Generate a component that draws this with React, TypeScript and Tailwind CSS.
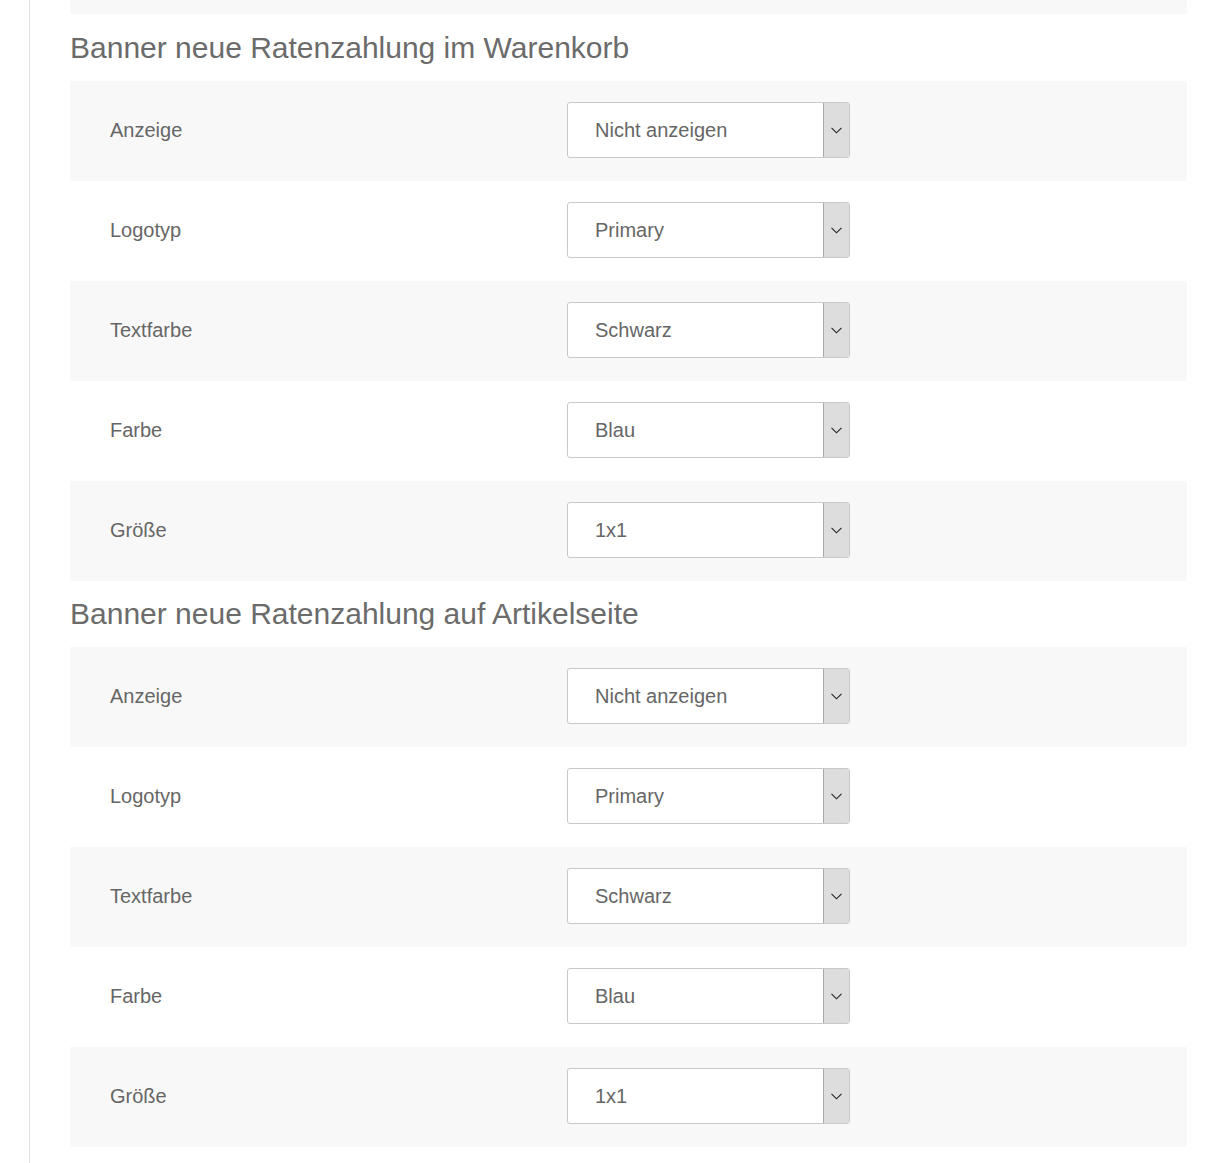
import React from 'react';

const rows = [
  { label: 'Anzeige', value: 'Nicht anzeigen' },
  { label: 'Logotyp', value: 'Primary' },
  { label: 'Textfarbe', value: 'Schwarz' },
  { label: 'Farbe', value: 'Blau' },
  { label: 'Größe', value: '1x1' },
];

const FakeSelect: React.FC<{ value: string }> = ({ value }) => (
  <div className="flex h-[56px] w-[283px] rounded-[3px] border border-[#c8c8c8] bg-white overflow-hidden">
    <div className="flex flex-1 items-center pl-[27px] text-[20px] text-[#666]">{value}</div>
    <div className="flex w-[26px] items-center justify-center border-l border-[#a8a8a8] bg-[#dddddd]">
      <svg width="11" height="7" viewBox="0 0 11 7" fill="none">
        <path d="M0.5 0.8 L5.5 5.8 L10.5 0.8" stroke="#222" strokeWidth="1.1" />
      </svg>
    </div>
  </div>
);

const Section: React.FC<{ title: string; headH: string }> = ({ title, headH }) => (
  <div>
    <h2 className={`flex ${headH} items-center text-[30px] leading-none text-[#6b6b6b]`}>{title}</h2>
    {rows.map((r, i) => (
      <div key={r.label} className={`flex h-[100px] items-center pb-[2px] ${i % 2 === 0 ? 'bg-[#f8f8f8]' : 'bg-white'}`}>
        <div className="w-[497px] pl-[40px] text-[20px] text-[#666]">{r.label}</div>
        <FakeSelect value={r.value} />
      </div>
    ))}
  </div>
);

export default function App() {
  return (
    <div className="flex min-h-[1163px] bg-white" style={{ fontFamily: '"Liberation Sans", Arial, sans-serif' }}>
      <div className="ml-[29px] w-px bg-[#e0e0e0]" />
      <div className="ml-[40px] w-[1117px]">
        <div className="h-[14px] bg-[#f8f8f8]" />
        <Section title="Banner neue Ratenzahlung im Warenkorb" headH="h-[67px]" />
        <Section title="Banner neue Ratenzahlung auf Artikelseite" headH="h-[66px]" />
      </div>
    </div>
  );
}
